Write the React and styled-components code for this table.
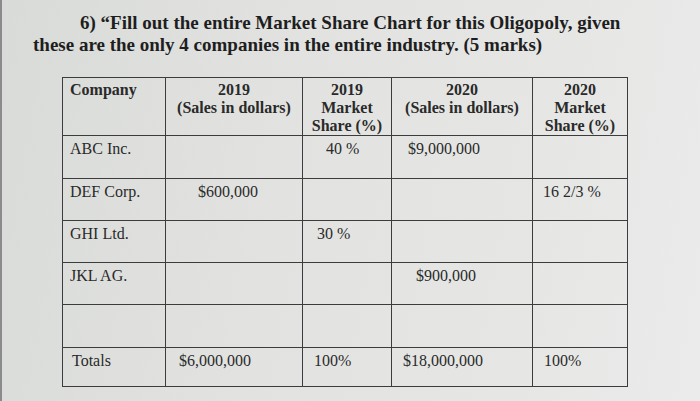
import React from "react";
import styled, { createGlobalStyle } from "styled-components";

const GlobalStyle = createGlobalStyle`
  html, body {
    margin: 0;
    padding: 0;
  }
  body {
    font-family: "Liberation Serif", "Times New Roman", serif;
    color: #262626;
  }
`;

const Sheet = styled.div`
  width: 700px;
  height: 401px;
  box-sizing: border-box;
  overflow: hidden;
  border-left: 2px solid #8a8b8a;
  background: linear-gradient(100deg, #d9dbd9 0%, #e2e3e1 40%, #e6e7e5 75%, #eaebea 100%);
  padding: 12px 0 0 31px;
`;

const Question = styled.div`
  font-weight: bold;
  font-size: 19px;
  line-height: 22px;
  color: #1e1e1e;
`;

const Line = styled.div`
  padding-left: ${(p) => p.$indent || 0}px;
  white-space: nowrap;
`;

const Table = styled.table`
  margin: 21px 0 0 29px;
  border-collapse: collapse;
  table-layout: fixed;
  width: 565px;
  font-size: 16px;
  line-height: 18px;
  color: #2a2a2a;
`;

const Col = styled.col`
  width: ${(p) => p.$w}px;
`;

const HeadCell = styled.th`
  border: 1px solid #3c3c3c;
  height: 57px;
  box-sizing: border-box;
  padding: 3px 4px 0;
  vertical-align: top;
  font-weight: bold;
  text-align: ${(p) => (p.$left ? "left" : "center")};
  padding-left: ${(p) => (p.$left ? "7px" : "4px")};
`;

const Cell = styled.td`
  border: 1px solid #3c3c3c;
  height: ${(p) => p.$h || 42}px;
  box-sizing: border-box;
  padding: 4px 2px 0 ${(p) => p.$indent ?? 7}px;
  vertical-align: top;
  white-space: nowrap;
`;

const rows = [
  { h: 43, cells: ["ABC Inc.", "", "40 %", "$9,000,000", ""], indent: [7, 8, 23, 16, 10] },
  { h: 42, cells: ["DEF Corp.", "$600,000", "", "", "16 2/3 %"], indent: [7, 32, 10, 10, 10] },
  { h: 42, cells: ["GHI Ltd.", "", "30 %", "", ""], indent: [7, 8, 14, 10, 10] },
  { h: 42, cells: ["JKL AG.", "", "", "$900,000", ""], indent: [7, 8, 10, 24, 10] },
  { h: 43, cells: ["", "", "", "", ""], indent: [7, 8, 10, 10, 10] },
  { h: 39, cells: ["Totals", "$6,000,000", "100%", "$18,000,000", "100%"], indent: [9, 13, 11, 11, 11] },
];

export default function App() {
  return (
    <>
      <GlobalStyle />
      <Sheet>
        <Question>
          <Line $indent={47}>
            6) “Fill out the entire Market Share Chart for this Oligopoly, given
          </Line>
          <Line>these are the only 4 companies in the entire industry. (5 marks)</Line>
        </Question>
        <Table>
          <colgroup>
            <Col $w={103} />
            <Col $w={137} />
            <Col $w={89} />
            <Col $w={141} />
            <Col $w={95} />
          </colgroup>
          <thead>
            <tr>
              <HeadCell $left>Company</HeadCell>
              <HeadCell>
                2019
                <br />
                (Sales in dollars)
              </HeadCell>
              <HeadCell>
                2019
                <br />
                Market
                <br />
                Share (%)
              </HeadCell>
              <HeadCell>
                2020
                <br />
                (Sales in dollars)
              </HeadCell>
              <HeadCell>
                2020
                <br />
                Market
                <br />
                Share (%)
              </HeadCell>
            </tr>
          </thead>
          <tbody>
            {rows.map((r, i) => (
              <tr key={i}>
                {r.cells.map((c, j) => (
                  <Cell key={j} $h={r.h} $indent={r.indent[j]}>
                    {c}
                  </Cell>
                ))}
              </tr>
            ))}
          </tbody>
        </Table>
      </Sheet>
    </>
  );
}
